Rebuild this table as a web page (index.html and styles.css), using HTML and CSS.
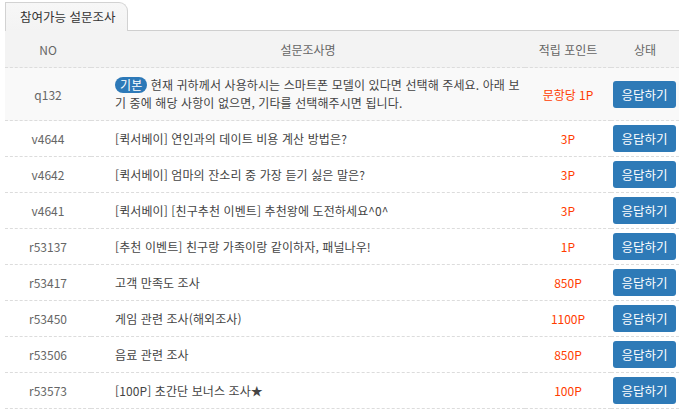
FILE: index.html
```html
<!DOCTYPE html>
<html lang="ko">
<head>
<meta charset="utf-8">
<link rel="stylesheet" href="styles.css">
</head>
<body>
<div class="wrap">
  <div class="tabs">
    <div class="tab">참여가능 설문조사</div>
  </div>
  <table class="survey">
    <colgroup>
      <col class="c-no"><col class="c-title"><col class="c-pt"><col class="c-st">
    </colgroup>
    <thead>
      <tr><th>NO</th><th>설문조사명</th><th>적립 포인트</th><th>상태</th></tr>
    </thead>
    <tbody>
      <tr class="hl">
        <td class="no">q132</td>
        <td class="title"><span class="badge">기본</span> 현재 귀하께서 사용하시는 스마트폰 모델이 있다면 선택해 주세요. 아래 보<br>기 중에 해당 사항이 없으면, 기타를 선택해주시면 됩니다.</td>
        <td class="pt">문항당 1P</td>
        <td class="st"><button class="btn">응답하기</button></td>
      </tr>
      <tr><td class="no">v4644</td><td class="title">[퀵서베이] 연인과의 데이트 비용 계산 방법은?</td><td class="pt">3P</td><td class="st"><button class="btn">응답하기</button></td></tr>
      <tr><td class="no">v4642</td><td class="title">[퀵서베이] 엄마의 잔소리 중 가장 듣기 싫은 말은?</td><td class="pt">3P</td><td class="st"><button class="btn">응답하기</button></td></tr>
      <tr><td class="no">v4641</td><td class="title">[퀵서베이] [친구추천 이벤트] 추천왕에 도전하세요^0^</td><td class="pt">3P</td><td class="st"><button class="btn">응답하기</button></td></tr>
      <tr><td class="no">r53137</td><td class="title">[추천 이벤트] 친구랑 가족이랑 같이하자, 패널나우!</td><td class="pt">1P</td><td class="st"><button class="btn">응답하기</button></td></tr>
      <tr><td class="no">r53417</td><td class="title">고객 만족도 조사</td><td class="pt">850P</td><td class="st"><button class="btn">응답하기</button></td></tr>
      <tr><td class="no">r53450</td><td class="title">게임 관련 조사(해외조사)</td><td class="pt">1100P</td><td class="st"><button class="btn">응답하기</button></td></tr>
      <tr><td class="no">r53506</td><td class="title">음료 관련 조사</td><td class="pt">850P</td><td class="st"><button class="btn">응답하기</button></td></tr>
      <tr><td class="no">r53573</td><td class="title">[100P] 초간단 보너스 조사★</td><td class="pt">100P</td><td class="st"><button class="btn">응답하기</button></td></tr>
    </tbody>
  </table>
</div>
</body>
</html>
```

FILE: styles.css
```css
html, body {
  margin: 0;
  padding: 0;
  background: #fff;
}
body {
  font-family: "Noto Sans CJK KR", "Noto Sans", sans-serif;
  font-size: 12px;
  color: #444;
}
.wrap {
  width: 674px;
  padding: 2px 5px 0 5px;
}
.tabs {
  display: flex;
  border-bottom: 1px solid #cfcfcf;
  height: 28px;
}
.tab {
  box-sizing: border-box;
  width: 123px;
  height: 29px;
  margin-bottom: -1px;
  padding-left: 14px;
  line-height: 28px;
  color: #333;
  background: linear-gradient(#f7f7f7, #f3f3f3);
  border: 1px solid #d2d2d2;
  border-bottom: none;
  border-top-right-radius: 9px;
  font-size: 12.5px;
}
.survey {
  width: 674px;
  border-collapse: collapse;
  table-layout: fixed;
}
.c-no { width: 86px; }
.c-title { width: 434px; }
.c-pt { width: 86px; }
.c-st { width: 68px; }
.survey th {
  height: 36px;
  padding: 0;
  background: #f3f3f3;
  font-weight: normal;
  color: #666;
  border-bottom: 1px dashed #dcdcdc;
}
.survey td {
  height: 35px;
  padding: 0;
  border-bottom: 1px dashed #dcdcdc;
  vertical-align: middle;
}
.survey tr.hl td {
  height: 52px;
  background: #f9f9f9;
}
.no {
  text-align: center;
  color: #666;
}
.title {
  padding-left: 24px !important;
  padding-right: 2px !important;
  color: #444;
  line-height: 18px;
  letter-spacing: 0.1px;
}
.pt {
  text-align: center;
  color: #ff3d00;
}
.st {
  text-align: left;
}
.badge {
  display: inline-block;
  background: #2d79b8;
  color: #fff;
  border-radius: 8px;
  padding: 0 5px;
  height: 16px;
  line-height: 16px;
  font-size: 12px;
  vertical-align: 0;
}
.btn {
  display: block;
  width: 63px;
  height: 27px;
  margin-left: 2px;
  padding: 0;
  border: none;
  border-radius: 3px;
  background: #2e7ab7;
  color: #fff;
  font-family: inherit;
  font-size: 12.5px;
}
```
